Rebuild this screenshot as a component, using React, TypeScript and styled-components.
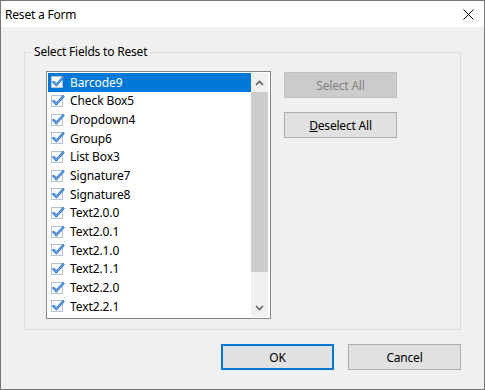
import React from 'react';
import styled, { createGlobalStyle } from 'styled-components';

const GlobalStyle = createGlobalStyle`
  html, body {
    margin: 0;
    padding: 0;
    background: #ffffff;
  }
  body {
    font-family: "Noto Sans", "Open Sans", sans-serif;
    font-size: 12px;
    color: #000000;
  }
`;

const SWindow = styled.div`
  width: 485px;
  height: 390px;
  box-sizing: border-box;
  border: 1px solid #777777;
  display: flex;
  flex-direction: column;
  background: #f0f0f0;
`;

const STitleBar = styled.div`
  height: 26px;
  background: #ffffff;
  display: flex;
  align-items: center;
  justify-content: space-between;
  padding: 0 10px 0 4px;
  flex-shrink: 0;
`;

const STitle = styled.span`
  font-size: 12px;
  letter-spacing: -0.2px;
`;

const SBody = styled.div`
  flex: 1;
  display: flex;
  flex-direction: column;
  padding: 17px 23px 0 23px;
`;

const SGroup = styled.fieldset`
  margin: 0;
  padding: 0;
  width: 437px;
  height: 286px;
  box-sizing: border-box;
  border: 1px solid #dcdcdc;
  display: flex;
  align-items: flex-start;
  gap: 13px;
`;

const SLegend = styled.legend`
  margin-left: 6px;
  padding: 0 3px;
  line-height: 16px;
  letter-spacing: -0.2px;
`;

const SList = styled.div`
  margin: 11px 0 0 21px;
  width: 225px;
  height: 248px;
  box-sizing: border-box;
  border: 1px solid #828790;
  background: #ffffff;
  padding: 1px;
  display: flex;
`;

const SRows = styled.div`
  flex: 1;
  display: flex;
  flex-direction: column;
  overflow: hidden;
`;

const SRow = styled.div<{ $selected?: boolean }>`
  height: 18.67px;
  flex-shrink: 0;
  display: flex;
  align-items: center;
  gap: 5px;
  padding-left: 3px;
  background: ${({ $selected }) => ($selected ? '#0078d7' : 'transparent')};
  color: ${({ $selected }) => ($selected ? '#ffffff' : '#000000')};
  letter-spacing: -0.1px;
  white-space: nowrap;
`;

const SScrollBar = styled.div`
  width: 17px;
  background: #f0f0f0;
  display: flex;
  flex-direction: column;
  margin-right: 1px;
`;

const SArrow = styled.div`
  height: 19px;
  display: grid;
  place-items: center;
  flex-shrink: 0;
`;

const SThumb = styled.div`
  height: 180px;
  background: #cdcdcd;
`;

const STrack = styled.div`
  flex: 1;
`;

const SSide = styled.div`
  margin-top: 12px;
  display: flex;
  flex-direction: column;
  gap: 14px;
`;

const SButton = styled.button<{ $primary?: boolean }>`
  width: 113px;
  height: 26px;
  box-sizing: border-box;
  margin: 0;
  padding: 0;
  font-family: inherit;
  font-size: 12px;
  letter-spacing: -0.2px;
  color: #000000;
  background: #e1e1e1;
  border: ${({ $primary }) => ($primary ? '2px solid #0078d7' : '1px solid #adadad')};
  border-radius: 0;

  &:disabled {
    background: #cccccc;
    border-color: #bfbfbf;
    color: #838383;
  }
`;

const SFooter = styled.div`
  display: flex;
  justify-content: flex-end;
  gap: 14px;
  margin-top: 14px;
`;

const CheckIcon = () => (
  <svg width="14" height="14" viewBox="0 0 14 14">
    <rect x="0.5" y="1.5" width="11" height="11" fill="#ffffff" stroke="#b3c3d6" />
    <path d="M2.6 7.2 L5.4 10 L12.2 2.4" fill="none" stroke="#2a6bc0" strokeWidth="2.6" strokeLinecap="round" strokeLinejoin="round" />
    <path d="M2.6 7.2 L5.4 10 L12.2 2.4" fill="none" stroke="#6aa8ee" strokeWidth="1.2" strokeLinecap="round" strokeLinejoin="round" />
  </svg>
);

const CloseIcon = () => (
  <svg width="11" height="11" viewBox="0 0 11 11">
    <path d="M0.5 0.5 L10.5 10.5 M10.5 0.5 L0.5 10.5" stroke="#000000" strokeWidth="1" />
  </svg>
);

const Chevron = ({ up }: { up?: boolean }) => (
  <svg width="9" height="6" viewBox="0 0 9 6">
    <path d={up ? 'M1 5 L4.5 1.5 L8 5' : 'M1 1 L4.5 4.5 L8 1'} fill="none" stroke="#606060" strokeWidth="1.6" />
  </svg>
);

const fields = [
  'Barcode9',
  'Check Box5',
  'Dropdown4',
  'Group6',
  'List Box3',
  'Signature7',
  'Signature8',
  'Text2.0.0',
  'Text2.0.1',
  'Text2.1.0',
  'Text2.1.1',
  'Text2.2.0',
  'Text2.2.1',
];

export default function App() {
  return (
    <>
      <GlobalStyle />
      <SWindow>
        <STitleBar>
          <STitle>Reset a Form</STitle>
          <CloseIcon />
        </STitleBar>
        <SBody>
          <SGroup>
            <SLegend>Select Fields to Reset</SLegend>
            <SList>
              <SRows>
                {fields.map((f, i) => (
                  <SRow key={f} $selected={i === 0}>
                    <CheckIcon />
                    <span>{f}</span>
                  </SRow>
                ))}
              </SRows>
              <SScrollBar>
                <SArrow>
                  <Chevron up />
                </SArrow>
                <SThumb />
                <STrack />
                <SArrow>
                  <Chevron />
                </SArrow>
              </SScrollBar>
            </SList>
            <SSide>
              <SButton disabled>Select All</SButton>
              <SButton>
                <u>D</u>eselect All
              </SButton>
            </SSide>
          </SGroup>
          <SFooter>
            <SButton $primary>OK</SButton>
            <SButton>Cancel</SButton>
          </SFooter>
        </SBody>
      </SWindow>
    </>
  );
}
